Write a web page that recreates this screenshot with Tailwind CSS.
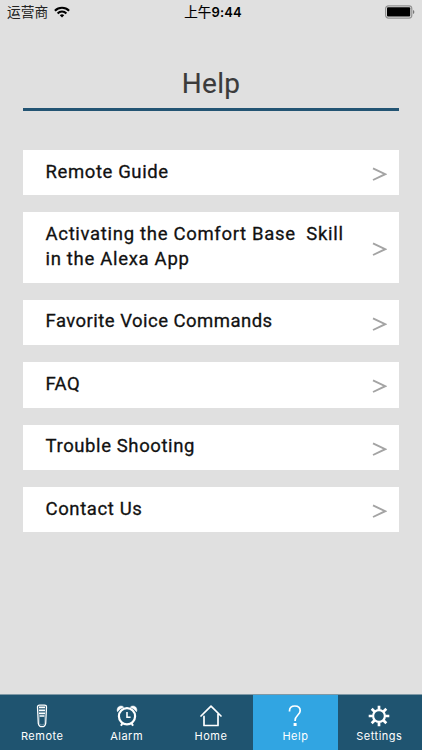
<!DOCTYPE html>
<html lang="en">
<head>
<meta charset="utf-8">
<title>Help</title>
<script src="https://cdn.jsdelivr.net/npm/@tailwindcss/browser@4"></script>
</head>
<body class="w-[422px] h-[750px] overflow-hidden bg-[#e0e0e0] font-['Roboto','Noto_Sans_CJK_SC',sans-serif] flex flex-col">
<header class="h-6 shrink-0 grid grid-cols-3 items-center px-[7px] text-black font-['Inter','Noto_Sans_CJK_SC',sans-serif]">
  <div class="flex items-center gap-[6px]">
    <span class="text-[13.7px] leading-6 text-[#222]">运营商</span>
    <svg class="w-4 h-3" viewBox="0 0 16 12" fill="none" stroke="#000" stroke-width="2.1"><path d="M.9 4.7a10.1 10.1 0 0 1 14.2 0M3.6 7.4a6.2 6.2 0 0 1 8.8 0"/><path d="M8 11.6 5.8 9.3a3.2 3.2 0 0 1 4.4 0z" fill="#000" stroke="none"/></svg>
  </div>
  <div class="text-center text-[13px] leading-6 font-semibold whitespace-nowrap pl-[4px] tracking-[.15px]"><span class="font-normal [-webkit-text-stroke:.2px] text-[13.5px]">上午</span>9:44</div>
  <svg class="justify-self-end w-[30px] h-[14px]" viewBox="0 0 30 14"><rect x=".6" y=".9" width="26.2" height="12.2" rx="2.8" fill="none" stroke="#929292" stroke-width="1.2"/><rect x="2" y="2.3" width="23.2" height="9.2" rx="1" fill="#000"/><path d="M28 5v4q1.4-.5 1.4-2T28 5z" fill="#777"/></svg>
</header>
<main class="flex-1 px-[23px]">
  <h1 class="mt-[38px] h-[49px] border-b-3 border-[#235473] text-center text-[28px] leading-[43px] tracking-[.3px] text-[#3b3b3b] [-webkit-text-stroke:.15px]">Help</h1>
  <nav class="mt-[39px] flex flex-col gap-[16.8px] text-[18.5px] leading-[25px] [-webkit-text-stroke:.3px] text-[#111]">
    <a class="h-[45.3px] bg-white pl-[22.5px] pr-[12.5px] flex justify-between"><span class="pt-[9.5px] tracking-[.6px]">Remote Guide</span><svg class="mt-[16px] w-[15px] h-4" viewBox="0 0 15 16" fill="none" stroke="#a4a4a4" stroke-width="1.9"><path d="M1 2.4 13.2 8.2 1 14"/></svg></a>
    <a class="h-[71.3px] bg-white pl-[22.5px] pr-[12.5px] flex justify-between"><span class="pt-[9.5px] whitespace-pre tracking-[.69px]">Activating the Comfort Base  Skill
in the Alexa App</span><svg class="mt-[29px] w-[15px] h-4" viewBox="0 0 15 16" fill="none" stroke="#a4a4a4" stroke-width="1.9"><path d="M1 2.4 13.2 8.2 1 14"/></svg></a>
    <a class="h-[45.3px] bg-white pl-[22.5px] pr-[12.5px] flex justify-between"><span class="pt-[9px] tracking-[.47px]">Favorite Voice Commands</span><svg class="mt-[16px] w-[15px] h-4" viewBox="0 0 15 16" fill="none" stroke="#a4a4a4" stroke-width="1.9"><path d="M1 2.4 13.2 8.2 1 14"/></svg></a>
    <a class="h-[45.6px] bg-white pl-[22.5px] pr-[12.5px] flex justify-between"><span class="pt-[9.5px] tracking-[.4px]">FAQ</span><svg class="mt-[16px] w-[15px] h-4" viewBox="0 0 15 16" fill="none" stroke="#a4a4a4" stroke-width="1.9"><path d="M1 2.4 13.2 8.2 1 14"/></svg></a>
    <a class="h-[45.6px] bg-white pl-[22.5px] pr-[12.5px] flex justify-between"><span class="pt-[9px] tracking-[.6px]">Trouble Shooting</span><svg class="mt-[16px] w-[15px] h-4" viewBox="0 0 15 16" fill="none" stroke="#a4a4a4" stroke-width="1.9"><path d="M1 2.4 13.2 8.2 1 14"/></svg></a>
    <a class="h-[45.3px] bg-white pl-[22.5px] pr-[12.5px] flex justify-between"><span class="pt-[9.5px] tracking-[.62px]">Contact Us</span><svg class="mt-[16px] w-[15px] h-4" viewBox="0 0 15 16" fill="none" stroke="#a4a4a4" stroke-width="1.9"><path d="M1 2.4 13.2 8.2 1 14"/></svg></a>
  </nav>
</main>
<footer class="h-14 shrink-0 grid grid-cols-5 bg-[#1f5470] border-t border-[#7f99a6] text-white text-[11px] leading-4 font-normal tracking-[.5px] font-['Inter',sans-serif]">
  <a class="flex flex-col items-center pt-[9px]"><svg class="w-6 h-6" viewBox="0 0 24 24" fill="none" stroke="#fff"><path d="M7.5 3q0-1.8 2-1.8h5q2 0 2 1.8l-.8 16.3q-.7 3.4-3.7 3.4t-3.7-3.4z" stroke-width="1.3"/><path d="M9 3.3h6M9 6.3h6M9 9.3h6M9.4 12h5.2" stroke-width="1.7"/><path d="M9.4 13v6q.7 2 2.6 2t2.6-2v-6" stroke-width=".5" opacity=".6"/></svg><span>Remote</span></a>
  <a class="flex flex-col items-center pt-[9px]"><svg class="w-6 h-6" viewBox="0 0 24 24" fill="none" stroke="#fff"><circle cx="12" cy="12.2" r="8.1" stroke-width="2.2"/><path d="M12 8v5.3h3.6" stroke-width="1.6"/><path d="M2.5 7.8C1.3 5 3.2 2 6 2q1.8 0 2.7 1.2-4 1-6.2 4.6zM21.5 7.8C22.7 5 20.8 2 18 2q-1.8 0-2.7 1.2 4 1 6.2 4.6z" fill="#fff" stroke-width=".5"/><path d="m7.5 19-1.5 2.7M16.5 19l1.5 2.7" stroke-width="2"/></svg><span>Alarm</span></a>
  <a class="flex flex-col items-center pt-[9px]"><svg class="w-6 h-6" viewBox="0 0 24 24" fill="none" stroke="#fff" stroke-width="1.7" stroke-linecap="round" stroke-linejoin="round"><path d="M2 12 12 2.2 22 12M5 12.4v9.1h14V10"/></svg><span>Home</span></a>
  <a class="flex flex-col items-center pt-[9px] bg-[#31a5e2]"><svg class="w-6 h-6" viewBox="0 0 24 24" fill="none" stroke="#fff" stroke-width="1.7"><path d="M6.5 7.4V7c0-3.2 2.3-5 5.4-5s5.3 1.8 5.3 4.7c0 4.2-5.1 4.6-5.1 9.8v.5"/><path d="M10.6 19h3v3h-3z" fill="#fff" stroke="none"/></svg><span>Help</span></a>
  <a class="flex flex-col items-center pt-[9px] pr-[1px]"><svg class="w-6 h-6" viewBox="0 0 24 24" fill="none" stroke="#fff"><circle cx="12" cy="12" r="5.9" stroke-width="2.2"/><path d="M12 1.7v4M12 18.3v4M1.7 12h4M18.3 12h4M4.7 4.7l3 3M16.3 16.3l3 3M4.7 19.3l3-3M16.3 7.7l3-3" stroke-width="2.7"/></svg><span>Settings</span></a>
</footer>
</body>
</html>
